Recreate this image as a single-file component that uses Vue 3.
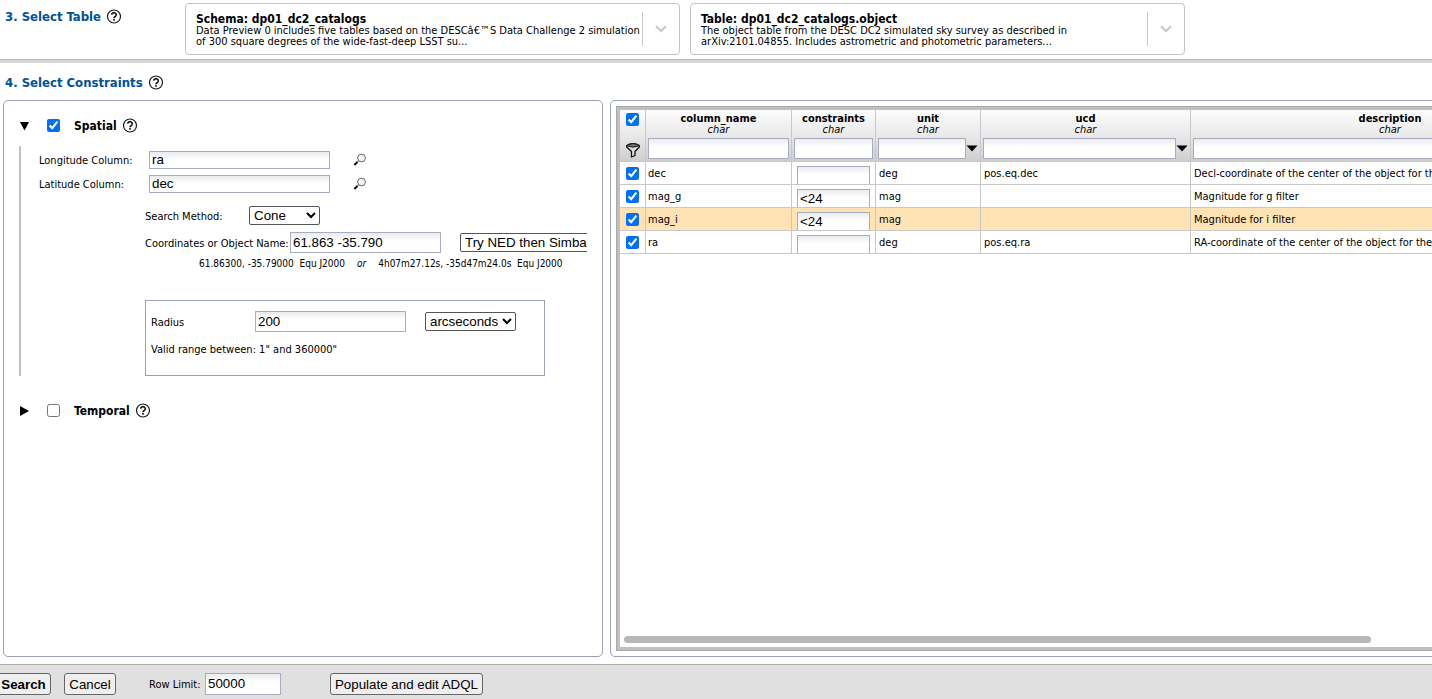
<script setup>
import { ref, reactive, h } from 'vue'

const HelpIcon = () =>
  h('svg', { class: 'help', width: 16, height: 16, viewBox: '0 0 16 16', role: 'img', 'aria-label': 'Help' }, [
    h('circle', { cx: 8, cy: 7.5, r: 6.5, fill: 'none', stroke: '#1a1a1a', 'stroke-width': 1.2 }),
    h('path', {
      d: 'M5.7 5.8a2.3 2.1 0 1 1 3.6 1.7C8.4 8 8 8.3 8 9.200',
      fill: 'none',
      stroke: '#1a1a1a',
      'stroke-width': 1.6
    }),
    h('rect', { x: 7.1, y: 10.1, width: 1.8, height: 1.6, fill: '#1a1a1a' })
  ])

const choices = [
  {
    title: 'Schema: dp01_dc2_catalogs',
    text: 'Data Preview 0 includes five tables based on the DESCâ€™S Data Challenge 2 simulation of 300 square degrees of the wide-fast-deep LSST su...'
  },
  {
    title: 'Table: dp01_dc2_catalogs.object',
    text: 'The object table from the DESC DC2 simulated sky survey as described in arXiv:2101.04855. Includes astrometric and photometric parameters...'
  }
]

const spatial = ref(true)
const temporal = ref(false)
const form = reactive({ lon: 'ra', lat: 'dec', target: '61.863 -35.790', radius: '200', limit: '50000' })
const allRows = ref(true)

const columns = [
  { name: 'column_name' },
  { name: 'constraints' },
  { name: 'unit', menu: true },
  { name: 'ucd', menu: true },
  { name: 'description' }
]

const rows = reactive([
  { on: true, name: 'dec', limit: '', unit: 'deg', ucd: 'pos.eq.dec', text: 'Decl-coordinate of the center of the object for the' },
  { on: true, name: 'mag_g', limit: '<24', unit: 'mag', ucd: '', text: 'Magnitude for g filter' },
  { on: true, name: 'mag_i', limit: '<24', unit: 'mag', ucd: '', text: 'Magnitude for i filter', current: true },
  { on: true, name: 'ra', limit: '', unit: 'deg', ucd: 'pos.eq.ra', text: 'RA-coordinate of the center of the object for the' }
])
</script>

<template>
  <div class="page">
    <section class="pick">
      <h2>3. Select Table <HelpIcon /></h2>
      <button v-for="c in choices" :key="c.title" type="button" class="choice">
        <span class="choice-text"><b>{{ c.title }}</b><span>{{ c.text }}</span></span>
        <span class="choice-arrow">
          <svg width="14" height="10" viewBox="0 0 14 10"><path d="M2 2.200L7 7l5-4.800" fill="none" stroke="#c8c8c8" stroke-width="2.200" /></svg>
        </span>
      </button>
    </section>

    <h2 class="step">4. Select Constraints <HelpIcon /></h2>

    <main class="panels">
      <section class="panel conditions">
        <div class="group-head">
          <button type="button" class="toggle" aria-label="Collapse spatial">
            <svg width="10" height="10" viewBox="0 0 10 10"><path d="M1 1h9L5.500 9.500z" /></svg>
          </button>
          <input id="spatial" v-model="spatial" type="checkbox" />
          <label for="spatial">Spatial</label>
          <HelpIcon />
        </div>
        <div class="group-body">
          <div class="column-row">
            <label for="lon">Longitude Column:</label>
            <input id="lon" v-model="form.lon" type="text" />
            <button type="button" class="lookup" aria-label="Find longitude column">
              <svg width="14" height="14" viewBox="0 0 14 14"><circle cx="8.500" cy="5" r="3.900" fill="#f6f6f6" stroke="#666" /><path d="M5.700 7.800L4.300 9.200" stroke="#555" /><path d="M4.500 9L1.300 12" stroke="#111" stroke-width="2" /></svg>
            </button>
          </div>
          <div class="column-row">
            <label for="lat">Latitude Column:</label>
            <input id="lat" v-model="form.lat" type="text" />
            <button type="button" class="lookup" aria-label="Find latitude column">
              <svg width="14" height="14" viewBox="0 0 14 14"><circle cx="8.500" cy="5" r="3.900" fill="#f6f6f6" stroke="#666" /><path d="M5.700 7.800L4.300 9.200" stroke="#555" /><path d="M4.500 9L1.300 12" stroke="#111" stroke-width="2" /></svg>
            </button>
          </div>
          <div class="search">
            <div class="method-row">
              <label for="method">Search Method:</label>
              <select id="method"><option>Cone</option></select>
            </div>
            <div class="target-row">
              <label for="target">Coordinates or Object Name:</label>
              <input id="target" v-model="form.target" type="text" />
              <select aria-label="Name resolver"><option>Try NED then Simbad</option></select>
            </div>
            <p class="resolved"><span>61.86300, -35.79000&nbsp; Equ J2000</span><i>or</i><span>4h07m27.12s, -35d47m24.0s&nbsp; Equ J2000</span></p>
            <div class="radius">
              <div class="radius-row">
                <label for="radius">Radius</label>
                <input id="radius" v-model="form.radius" type="text" />
                <select aria-label="Radius unit"><option>arcseconds</option></select>
              </div>
              <p>Valid range between: 1" and 360000"</p>
            </div>
          </div>
        </div>
        <div class="group-head second">
          <button type="button" class="toggle" aria-label="Expand temporal">
            <svg width="10" height="10" viewBox="0 0 10 10"><path d="M1 0v10l9-5z" /></svg>
          </button>
          <input id="temporal" v-model="temporal" type="checkbox" />
          <label for="temporal">Temporal</label>
          <HelpIcon />
        </div>
      </section>

      <section class="panel columns">
        <div class="frame">
          <table>
            <colgroup><col class="c-check" /><col class="c-name" /><col class="c-limit" /><col class="c-unit" /><col class="c-ucd" /><col class="c-text" /></colgroup>
            <thead>
              <tr>
                <th class="check-head">
                  <div>
                    <input v-model="allRows" type="checkbox" aria-label="Select all rows" />
                    <svg width="14" height="16" viewBox="0 0 14 16"><path d="M.700 3.500Q7 0 13.300 3.500V5L9 9.500V13.500L5.500 15V9.500L.700 5z" fill="#ddd" stroke="#111" stroke-width="1.300" stroke-linejoin="round" /><path d="M1.200 3.800Q7 6.500 12.800 3.800L12 2.500Q7 .800 2 2.500z" fill="#777" stroke="#111" /></svg>
                  </div>
                </th>
                <th v-for="c in columns" :key="c.name">
                  <b>{{ c.name }}</b>
                  <i>char</i>
                  <div class="filter">
                    <input type="text" :aria-label="'Filter ' + c.name" />
                    <button v-if="c.menu" type="button" :aria-label="'Values of ' + c.name">
                      <svg width="12" height="7" viewBox="0 0 12 7"><path d="M.5.5h11L6 6.500z" /></svg>
                    </button>
                  </div>
                </th>
              </tr>
            </thead>
            <tbody>
              <tr v-for="r in rows" :key="r.name" :class="{ current: r.current }">
                <td class="check"><div class="cell"><input v-model="r.on" type="checkbox" :aria-label="'Use ' + r.name" /></div></td>
                <td class="name"><div class="cell">{{ r.name }}</div></td>
                <td><div class="cell limit"><input v-model="r.limit" type="text" :aria-label="'Constraint on ' + r.name" /></div></td>
                <td><div class="cell">{{ r.unit }}</div></td>
                <td><div class="cell">{{ r.ucd }}</div></td>
                <td><div class="cell">{{ r.text }}</div></td>
              </tr>
            </tbody>
          </table>
          <div class="scrollbar"></div>
        </div>
      </section>
    </main>

    <footer>
      <button type="button" class="go">Search</button>
      <button type="button" class="cancel">Cancel</button>
      <label for="limit">Row Limit:</label>
      <input id="limit" v-model="form.limit" type="text" />
      <button type="button" class="adql">Populate and edit ADQL</button>
    </footer>
  </div>
</template>

<style>
body {
  margin: 0;
  background: #fff;
}
</style>

<style scoped>
* {
  box-sizing: border-box;
}
.page {
  display: flex;
  flex-direction: column;
  min-height: 100vh;
  overflow: hidden;
  color: #000;
  font: 11px/14px Tahoma, "DejaVu Sans Condensed", "Noto Sans", sans-serif;
}
h2,
p {
  margin: 0;
}
h2 {
  display: flex;
  align-items: center;
  gap: 5px;
  height: 18px;
  padding-left: 5px;
  color: #005299;
  font-size: 13px;
  line-height: 18px;
  white-space: nowrap;
}
svg {
  display: block;
  flex: none;
}
button,
input,
select {
  margin: 0;
  color: #000;
  font-family: "Liberation Sans", Arial, sans-serif;
}
input[type="text"] {
  height: 20px;
  padding: 0 2px 1px;
  border: 1px solid #a9abc4;
  border-radius: 0;
  outline: 0;
  background: linear-gradient(#e9eced, #fff 8px);
}
input[type="checkbox"] {
  width: 13px;
  height: 13px;
  flex: none;
  accent-color: #0070f8;
}
select {
  height: 19px;
  padding: 0;
  border: 1px solid #555;
  border-radius: 2px;
  background: #fff;
}
.toggle,
.lookup,
.filter button {
  padding: 0;
  border: 0;
  background: none;
}

.pick {
  display: flex;
  align-items: flex-start;
  gap: 10px;
  height: 63px;
  padding-top: 3px;
  border-bottom: 3px solid #d6d6d6;
  box-shadow: inset 0 -1px #bababa;
}
.pick h2 {
  width: 175px;
  margin-top: 5px;
}
.choice {
  display: flex;
  align-items: center;
  width: 495px;
  height: 52px;
  padding: 0 0 0 10px;
  border: 1px solid #c4c4c4;
  border-radius: 4px;
  background: #fff;
  font: inherit;
  text-align: left;
}
.choice-text {
  flex: 1;
  padding-top: 2px;
  line-height: 11px;
}
.choice-text b {
  display: block;
  font-size: 12px;
  line-height: 12px;
}
.choice-text span {
  display: block;
}
.choice-arrow {
  display: grid;
  place-items: center;
  width: 37px;
  height: 34px;
  border-left: 1px solid #c8c8c8;
}
.step {
  margin: 11px 0 8px;
}

.panels {
  display: flex;
  flex: 1;
  gap: 7px;
  padding: 0 0 7px 3px;
}
.panel {
  border: 1px solid #98a2b4;
  border-radius: 5px;
}
.conditions {
  flex: 0 0 600px;
  padding: 16px 15px 0;
  overflow: hidden;
}
.group-head {
  display: flex;
  align-items: center;
  height: 18px;
  font-size: 12px;
  font-weight: bold;
}
.group-head input {
  margin: 0 14px 1px 18px;
}
.group-head label {
  margin-right: 5px;
}
.group-head.second {
  margin-top: 26px;
}
.group-body {
  margin-top: 11px;
  padding: 4px 0 0 18px;
  border-left: 2px solid #c0c0c0;
  overflow: hidden;
}
.group-body label {
  padding-top: 2px;
}
.column-row {
  display: flex;
  align-items: center;
  height: 24px;
  padding-bottom: 4px;
}
.column-row label {
  width: 110px;
}
.column-row input[type="text"] {
  width: 181px;
  height: 18px;
  margin-right: 23px;
}
.search {
  padding: 8px 0 0 106px;
}
.method-row,
.target-row,
.radius-row {
  display: flex;
  align-items: center;
  white-space: nowrap;
}
.method-row label {
  width: 104px;
}
.method-row select {
  width: 71px;
}
.target-row {
  margin-top: 7px;
}
.target-row label {
  flex: 0 0 145px;
}
.target-row input[type="text"],
.radius-row input[type="text"] {
  flex: none;
  width: 151px;
  height: 21px;
}
.target-row select {
  flex: 0 0 153px;
  margin-left: 19px;
}
.resolved {
  display: flex;
  margin: 4px 0 0 54px;
  font-size: 10px;
  white-space: nowrap;
}
.resolved i {
  margin: 0 12px;
}
.radius {
  width: 400px;
  height: 76px;
  margin-top: 29px;
  padding: 10px 5px;
  border: 1px solid #98a2b4;
}
.radius-row label {
  width: 104px;
}
.radius-row select {
  width: 91px;
  margin-left: 19px;
}
.radius p {
  margin-top: 11px;
}

.columns {
  flex: 0 0 1000px;
  padding: 5px;
}
.frame {
  display: flex;
  flex-direction: column;
  justify-content: space-between;
  height: 100%;
  border: 4px solid #c0c0c0;
  outline: 1px solid #a8a8a8;
  outline-offset: -1px;
}
table {
  width: 970px;
  border-collapse: separate;
  border-spacing: 0;
  table-layout: fixed;
}
.c-check { width: 26px; }
.c-name { width: 146px; }
.c-limit { width: 84px; }
.c-unit { width: 105px; }
.c-ucd { width: 210px; }
.c-text { width: 399px; }
th,
td {
  padding: 0;
  border-right: 1px solid #c8c8c8;
  border-bottom: 1px solid #c8c8c8;
}
th {
  height: 52px;
  background: linear-gradient(#fdfdfd, #e9e9e9 50%, #cecece);
  vertical-align: top;
  font-weight: normal;
}
th b,
th i {
  display: block;
  line-height: 11px;
}
th b {
  padding-top: 3px;
}
.check-head div {
  display: flex;
  flex-direction: column;
  align-items: center;
  gap: 16px;
  padding-top: 3px;
}
.filter {
  display: flex;
  align-items: center;
  margin: 3px 2px 0;
}
.filter input[type="text"] {
  flex: 1;
  min-width: 0;
  height: 21px;
}
.cell {
  height: 22px;
  padding-left: 3px;
  overflow: hidden;
  line-height: 24px;
  white-space: nowrap;
}
.name .cell {
  padding-left: 2px;
}
.check .cell {
  display: grid;
  place-items: center;
  padding: 0;
}
.cell.limit {
  padding: 4px 0 0 5px;
}
.limit input[type="text"] {
  display: block;
  width: 73px;
}
.current td {
  background: #ffe3b5;
}
.scrollbar {
  width: 747px;
  height: 7px;
  margin: 0 0 4px 4px;
  border-radius: 4px;
  background: #b8b8b8;
}

footer {
  display: flex;
  align-items: center;
  height: 35px;
  padding-top: 4px;
  border-top: 1px solid #ababab;
  background: #e0e0e0;
}
footer button {
  height: 22px;
  padding: 0;
  border: 1px solid #666;
  border-radius: 3px;
  background: #efefef;
}
.go {
  width: 55px;
  margin: 0 13px 0 -4px;
  font-weight: bold;
}
.cancel {
  width: 52px;
  margin-right: 33px;
}
footer label {
  width: 56px;
  padding-top: 2px;
}
footer input[type="text"] {
  width: 76px;
  height: 22px;
  margin-right: 49px;
}
.adql {
  width: 153px;
}
</style>
